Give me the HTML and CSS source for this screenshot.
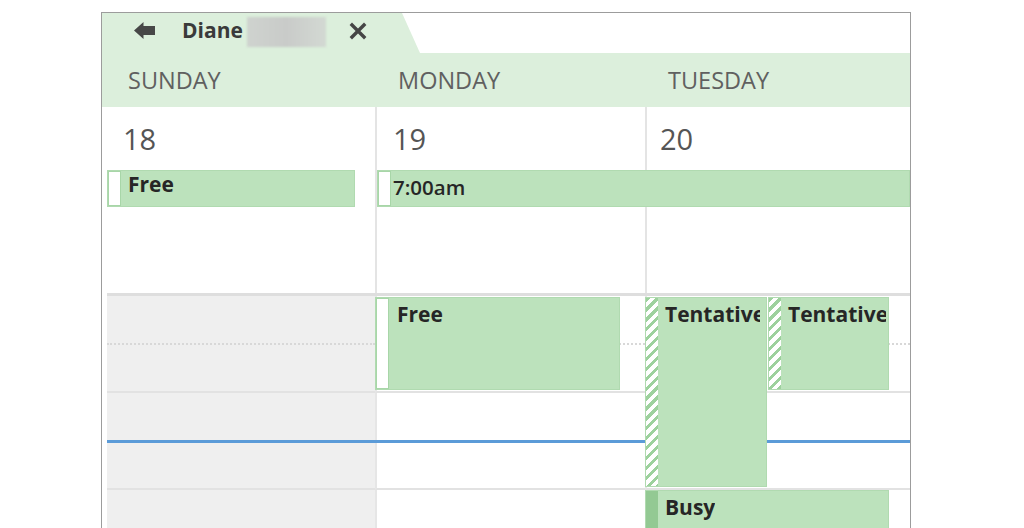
FILE: index.html
```html
<!DOCTYPE html>
<html>
<head>
<meta charset="utf-8">
<link rel="stylesheet" href="styles.css">
</head>
<body>
<div class="frame">
  <div class="tabbar">
    <div class="tab">
      <svg class="back" width="21" height="17" viewBox="0 0 21 17"><path d="M0 8.5 L9.5 0 L9.5 4 L21 4 L21 13 L9.5 13 L9.5 17 Z" fill="#474747"/></svg>
      <span class="name">Diane</span>
      <span class="redact"></span>
      <svg class="close" width="18" height="18" viewBox="0 0 18 18"><path d="M3 3 L15 15 M15 3 L3 15" stroke="#454545" stroke-width="3.4" stroke-linecap="square"/></svg>
    </div>
  </div>
  <div class="dayhead">
    <div class="dname first">SUNDAY</div>
    <div class="dname">MONDAY</div>
    <div class="dname">TUESDAY</div>
  </div>
  <div class="allday">
    <div class="adcell c1"><span class="num">18</span></div>
    <div class="adcell c2 divider"><span class="num">19</span></div>
    <div class="adcell c3 divider"><span class="num">20</span></div>
    <div class="event ad-sun"><span class="stripe free"></span><span class="label">Free</span></div>
    <div class="event ad-mon"><span class="stripe free"></span><span class="label thin">7:00am</span></div>
  </div>
  <div class="timegrid">
    <div class="slot sun r1 half"></div>
    <div class="slot sun r2 hour"></div>
    <div class="slot sun r3 half"></div>
    <div class="slot sun r4 hour"></div>
    <div class="slot sun r5 half"></div>

    <div class="slot mon r1 half"></div>
    <div class="slot mon r2 hour"></div>
    <div class="slot mon r3 half"></div>
    <div class="slot mon r4 hour"></div>
    <div class="slot mon r5 half"></div>

    <div class="slot tue r1 half"></div>
    <div class="slot tue r2 hour"></div>
    <div class="slot tue r3 half"></div>
    <div class="slot tue r4 hour"></div>
    <div class="slot tue r5 half"></div>

    <div class="nowline"></div>

    <div class="event tg mon-free"><span class="stripe free"></span><span class="label">Free</span></div>
    <div class="event tg tent1"><span class="stripe hatch"></span><span class="label">Tentative</span></div>
    <div class="event tg tent2"><span class="stripe hatch"></span><span class="label">Tentative</span></div>
    <div class="event tg busy"><span class="stripe dark"></span><span class="label">Busy</span></div>
  </div>
</div>
</body>
</html>
```

FILE: styles.css
```css
* { box-sizing: border-box; }
html, body { margin: 0; padding: 0; background: #fff; }
body { font-family: "Open Sans", "Noto Sans", sans-serif; overflow: hidden; width: 1024px; height: 528px; }

.frame {
  margin: 12px 0 0 101px;
  width: 810px;
  height: 516px;
  border: 1px solid #9c9c9c;
  border-bottom: none;
  overflow: hidden;
  background: #fff;
}

.tabbar { height: 40px; background: #fff; }
.tab {
  width: 318px;
  height: 40px;
  background: #dcefdc;
  clip-path: polygon(0 0, 300px 0, 318px 100%, 0 100%);
  display: flex;
  align-items: center;
  padding-left: 32px;
  padding-bottom: 6px;
}
.back { display: block; margin-top: 1px; }
.name {
  margin-left: 27px;
  font-weight: 700;
  font-size: 21px;
  color: #3a3a3a;
}
.redact {
  width: 79px;
  height: 30px;
  margin-left: 4px;
  margin-top: 4px;
  background: linear-gradient(90deg, #cfd3cf, #c9cbc9 50%, #d3d9d3);
  filter: blur(1px);
}
.close { display: block; margin-left: 23px; margin-top: 2px; }

.dayhead {
  height: 54px;
  background: #dcefdc;
  display: grid;
  grid-template-columns: 273px 270px 265px;
  align-items: center;
}
.dname {
  font-size: 23.5px;
  color: #606060;
  padding-left: 23px;
}
.dname.first { padding-left: 26px; }

.allday {
  height: 189px;
  margin-left: 5px;
  border-bottom: 3px solid #dedede;
  display: grid;
  grid-template-columns: 268px 270px 265px;
  grid-template-rows: 63px 37px 1fr;
}
.adcell { grid-row: 1 / -1; padding: 12px 0 0 16px; }
.adcell.c1 { grid-column: 1; }
.adcell.c2 { grid-column: 2; }
.adcell.c3 { grid-column: 3; padding-left: 13px; }
.divider { border-left: 2px solid #e4e4e4; }
.num { font-size: 29px; color: #555; line-height: 40px; }

.event {
  background: #bce2bc;
  border: 1px solid #b0dab0;
  display: flex;
  align-items: flex-start;
  overflow: hidden;
  z-index: 2;
}
.stripe { flex: none; align-self: stretch; width: 12px; }
.stripe.free { background: #fff; border: 1px solid #a8d6a8; width: 13px; }
.stripe.hatch {
  width: 12px;
  background: repeating-linear-gradient(135deg, #9dd19d 0 3px, #ffffff 3px 7px);
}
.stripe.dark { background: #93c993; width: 12px; }
.label {
  font-weight: 700;
  font-size: 21px;
  color: #262626;
  white-space: nowrap;
  padding: 0 0 0 7px;
  line-height: 26px;
  overflow: hidden;
  min-width: 0;
}
.label.thin { font-weight: 600; font-size: 20.5px; padding-left: 2px; padding-top: 3px; }

.ad-sun { grid-column: 1; grid-row: 2; margin-right: 20px; }
.ad-mon { grid-column: 2 / 4; grid-row: 2; margin-left: 2px; }

.timegrid {
  margin-left: 5px;
  display: grid;
  grid-template-columns: 268px 270px 123px 142px;
  grid-template-rows: 49px 48px 49px 48px 49px;
}
.slot { z-index: 0; }
.slot.sun { grid-column: 1; background: #efefef; }
.slot.mon { grid-column: 2; border-left: 2px solid #e6e6e6; }
.slot.tue { grid-column: 3 / 5; border-left: 2px solid #e6e6e6; }
.r1 { grid-row: 1; }
.r2 { grid-row: 2; }
.r3 { grid-row: 3; }
.r4 { grid-row: 4; }
.r5 { grid-row: 5; }
.slot.half { border-bottom: 2px dotted #d8d8d8; }
.slot.hour { border-bottom: 2px solid #e2e2e2; }

.nowline {
  grid-column: 1 / -1;
  grid-row: 4;
  align-self: start;
  height: 3px;
  margin-top: -2px;
  background: #5b9bd8;
  z-index: 1;
}

.tg .label { padding-top: 3px; }
.mon-free { grid-column: 2; grid-row: 1 / 3; margin: 1px 25px 3px 0; }
.mon-free .label { padding-left: 8px; }
.tent1 { grid-column: 3; grid-row: 1 / 5; margin: 1px 1px 3px 0; padding-right: 6px; }
.tent2 { grid-column: 4; grid-row: 1 / 3; margin: 1px 21px 3px 0; padding-right: 2px; }
.busy { grid-column: 3 / 5; grid-row: 5; margin: 0 21px 0 0; }
```
